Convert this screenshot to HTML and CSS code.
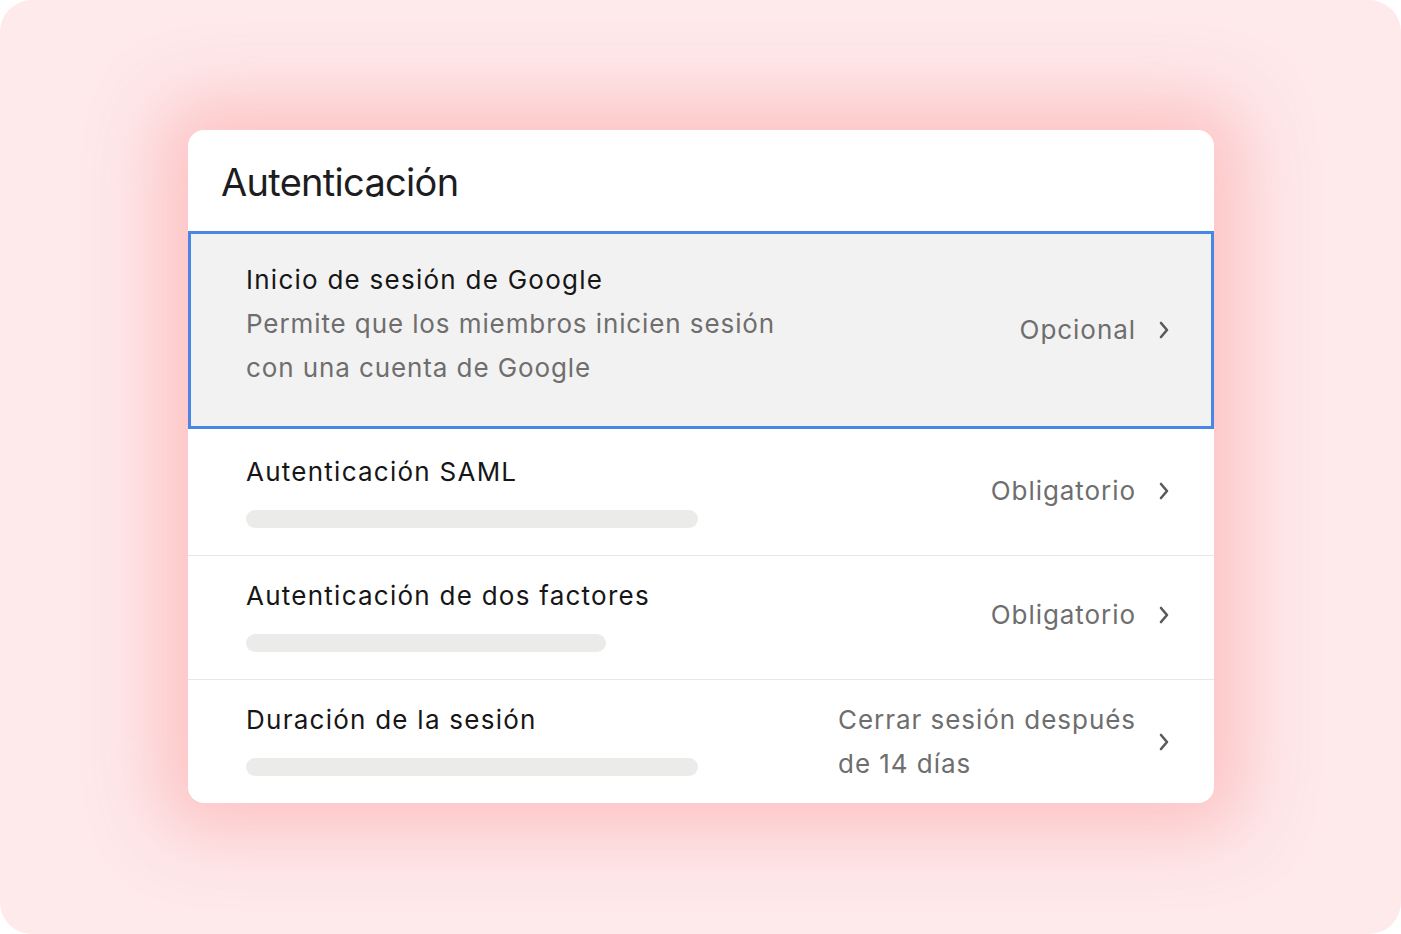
FILE: index.html
```html
<!DOCTYPE html>
<html lang="es">
<head>
<meta charset="utf-8">
<title>Autenticación</title>
<link rel="stylesheet" href="styles.css">
</head>
<body>
<div class="frame">
  <section class="card">
    <h1 class="card-title">Autenticación</h1>
    <div class="row row-selected">
      <div class="row-main">
        <div class="row-title">Inicio de sesión de Google</div>
        <div class="row-desc">Permite que los miembros inicien sesión<br>con una cuenta de Google</div>
      </div>
      <div class="row-value">Opcional</div>
      <svg class="chev" viewBox="0 0 10 18" width="10" height="18"><path d="M2 2l6 7-6 7"/></svg>
    </div>
    <div class="row">
      <div class="row-main">
        <div class="row-title">Autenticación SAML</div>
        <div class="bar bar-saml"></div>
      </div>
      <div class="row-value">Obligatorio</div>
      <svg class="chev" viewBox="0 0 10 18" width="10" height="18"><path d="M2 2l6 7-6 7"/></svg>
    </div>
    <div class="row">
      <div class="row-main">
        <div class="row-title">Autenticación de dos factores</div>
        <div class="bar bar-2fa"></div>
      </div>
      <div class="row-value">Obligatorio</div>
      <svg class="chev" viewBox="0 0 10 18" width="10" height="18"><path d="M2 2l6 7-6 7"/></svg>
    </div>
    <div class="row row-last">
      <div class="row-main">
        <div class="row-title">Duración de la sesión</div>
        <div class="bar bar-dur"></div>
      </div>
      <div class="row-value row-value-multi">Cerrar sesión después<br>de 14 días</div>
      <svg class="chev" viewBox="0 0 10 18" width="10" height="18"><path d="M2 2l6 7-6 7"/></svg>
    </div>
  </section>
</div>
</body>
</html>
```

FILE: styles.css
```css
html, body {
  margin: 0;
  padding: 0;
  background: #ffffff;
}

body {
  font-family: Inter, "Noto Sans", "Liberation Sans", sans-serif;
  -webkit-font-smoothing: antialiased;
}

.frame {
  width: 1401px;
  height: 934px;
  box-sizing: border-box;
  border-radius: 32px;
  background: #fee9eb;
  padding: 130px 0 0 188px;
  overflow: hidden;
}

.card {
  width: 1026px;
  background: #ffffff;
  border-radius: 16px;
  overflow: hidden;
  box-shadow: 0 0 70px 30px rgba(253, 184, 184, 0.78);
}

.card-title {
  margin: 0;
  height: 101px;
  box-sizing: border-box;
  padding: 28px 0 0 33px;
  font-size: 38px;
  line-height: 48px;
  font-weight: 400;
  color: #1d1d1f;
  letter-spacing: -0.7px;
}

.row {
  display: flex;
  align-items: center;
  padding: 22px 45px 27px 58px;
  border-top: 1px solid #e6e6e6;
}

.row-selected {
  border: 3px solid #4a86e6;
  background: #f3f2f2;
  padding: 24px 42px 36px 55px;
}

.row-selected + .row {
  border-top: none;
  padding-top: 25px;
}

.row-main {
  flex: 1;
  display: flex;
  flex-direction: column;
}

.row-title {
  font-size: 26px;
  line-height: 36px;
  font-weight: 400;
  color: #161617;
  letter-spacing: 1.25px;
}

.row-selected .row-title {
  line-height: 44px;
}

.row-desc {
  font-size: 26px;
  line-height: 44px;
  color: #6e6e6e;
  letter-spacing: 0.9px;
}

.bar {
  height: 18px;
  border-radius: 9px;
  background: #ebebea;
  margin-top: 20px;
}

.bar-saml { width: 452px; }
.bar-2fa { width: 360px; }
.bar-dur { width: 452px; }

.row-value {
  font-size: 26px;
  line-height: 44px;
  color: #6e6e6e;
  letter-spacing: 0.95px;
  margin-right: 23px;
}

.row-selected .row-value,
.row-selected .chev {
  margin-top: 12px;
}

.row-value-multi {
  margin-top: -4px;
  margin-bottom: -10px;
}

.row-last .chev {
  margin-top: 6px;
}

.chev {
  display: block;
  flex: none;
}

.chev path {
  fill: none;
  stroke: #5a5a5a;
  stroke-width: 2.6;
  stroke-linecap: round;
  stroke-linejoin: round;
}
```
